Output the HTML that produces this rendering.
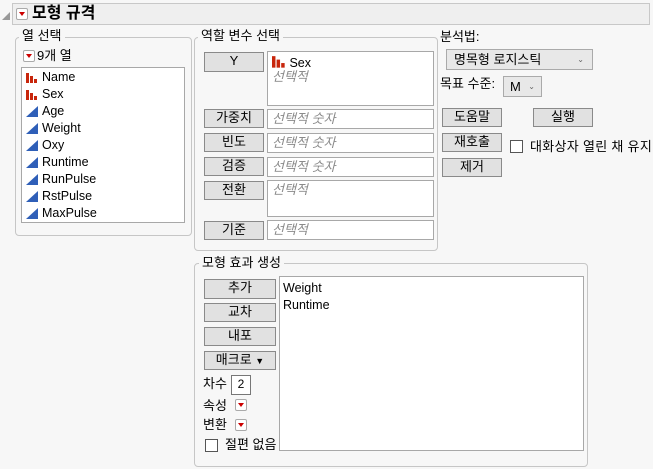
<!DOCTYPE html><html><head><meta charset="utf-8"><style>
*{box-sizing:border-box;margin:0;padding:0}
body{width:653px;height:469px;background:#f7f7f7;font-family:"Liberation Sans","Noto Sans CJK KR",sans-serif;font-size:13px;color:#000;position:relative;overflow:hidden}
.a{position:absolute}
.fs{position:absolute;border:1px solid #c6c6c6;border-radius:4px}
.lg{position:absolute;background:#f7f7f7;padding:0 3px;font-size:13px;line-height:14px}
.btn{position:absolute;background:#e1e1e1;border:1px solid #8a8a8a;text-align:center;font-size:13px;line-height:16px}
.box{position:absolute;background:#fff;border:1px solid #a8a8a8}
.ph{color:#8a8a8a;font-style:italic;font-size:13px;padding-left:4px;line-height:17px}
.dd{position:absolute;width:12px;height:12px;border:1px solid #aaa;background:#fff;border-radius:2px}
.dd:after{content:"";position:absolute;left:2px;top:3px;border-left:3px solid transparent;border-right:3px solid transparent;border-top:4px solid #c00;}
.item{position:absolute;left:20px;height:17px;line-height:17px;font-size:12.5px}
.nom{position:absolute;left:-16px;top:3px;width:12px;height:11px}
.cb{position:absolute;width:13px;height:13px;border:1px solid #555;background:#fff}
</style></head><body>
<div class="a" style="left:2px;top:12px;width:0;height:0;border-left:8px solid transparent;border-bottom:8px solid #999"></div>
<div class="a" style="left:12px;top:3px;width:638px;height:22px;background:#efefef;border:1px solid #c8c8c8"></div>
<div class="dd" style="left:16px;top:8px"></div>
<div class="a" style="left:32px;top:3px;font-size:16px;font-weight:bold;line-height:21px">모형 규격</div>

<div class="fs" style="left:15px;top:37px;width:177px;height:199px"></div>
<div class="lg" style="left:19px;top:29px">열 선택</div>
<div class="dd" style="left:23px;top:50px"></div>
<div class="a" style="left:37px;top:49px;line-height:14px">9개 열</div>
<div class="box" style="left:21px;top:67px;width:164px;height:156px">
<svg width="0" height="0" style="position:absolute"><defs>
<g id="n"><rect x="0" y="1" width="3" height="10" fill="#c8260c"/><rect x="4" y="4" width="3" height="7" fill="#c8260c"/><rect x="8" y="7" width="3" height="4" fill="#c8260c"/></g>
<g id="c"><polygon points="0,11 12,0 12,11" fill="#2f5fb8"/></g></defs></svg>
<div class="item" style="top:1px"><svg class="nom"><use href="#n"/></svg>Name</div>
<div class="item" style="top:18px"><svg class="nom"><use href="#n"/></svg>Sex</div>
<div class="item" style="top:35px"><svg class="nom"><use href="#c"/></svg>Age</div>
<div class="item" style="top:52px"><svg class="nom"><use href="#c"/></svg>Weight</div>
<div class="item" style="top:69px"><svg class="nom"><use href="#c"/></svg>Oxy</div>
<div class="item" style="top:86px"><svg class="nom"><use href="#c"/></svg>Runtime</div>
<div class="item" style="top:103px"><svg class="nom"><use href="#c"/></svg>RunPulse</div>
<div class="item" style="top:120px"><svg class="nom"><use href="#c"/></svg>RstPulse</div>
<div class="item" style="top:137px"><svg class="nom"><use href="#c"/></svg>MaxPulse</div>
</div>

<div class="fs" style="left:194px;top:37px;width:244px;height:214px"></div>
<div class="lg" style="left:198px;top:29px">역할 변수 선택</div>
<div class="btn" style="left:204px;top:52px;width:60px;height:20px">Y</div>
<div class="box" style="left:267px;top:51px;width:167px;height:55px"><div style="position:relative;left:4px;top:3px;line-height:15px;font-size:12.5px"><svg width="14" height="13" style="vertical-align:-1px"><g transform="scale(1.15)"><use href="#n"/></g></svg> Sex</div><div class="ph" style="line-height:17px">선택적</div></div>
<div class="btn" style="left:204px;top:109px;width:60px;height:19px">가중치</div>
<div class="box ph" style="left:267px;top:109px;width:167px;height:20px">선택적 숫자</div>
<div class="btn" style="left:204px;top:133px;width:60px;height:19px">빈도</div>
<div class="box ph" style="left:267px;top:133px;width:167px;height:20px">선택적 숫자</div>
<div class="btn" style="left:204px;top:157px;width:60px;height:19px">검증</div>
<div class="box ph" style="left:267px;top:157px;width:167px;height:20px">선택적 숫자</div>
<div class="btn" style="left:204px;top:181px;width:60px;height:19px">전환</div>
<div class="box ph" style="left:267px;top:180px;width:167px;height:37px">선택적</div>
<div class="btn" style="left:204px;top:221px;width:60px;height:19px">기준</div>
<div class="box ph" style="left:267px;top:220px;width:167px;height:20px">선택적</div>

<div class="a" style="left:440px;top:29px;line-height:15px">분석법:</div>
<div class="a" style="left:446px;top:49px;width:147px;height:21px;background:#e8e8e8;border:1px solid #aaa;line-height:19px;padding-left:7px">명목형 로지스틱<span style="position:absolute;right:8px;font-size:8px;color:#666">&#8964;</span></div>
<div class="a" style="left:440px;top:75px;line-height:17px">목표 수준:</div>
<div class="a" style="left:503px;top:76px;width:39px;height:21px;background:#e8e8e8;border:1px solid #aaa;line-height:19px;padding-left:6px">M<span style="position:absolute;right:6px;font-size:8px;color:#666">&#8964;</span></div>
<div class="btn" style="left:442px;top:108px;width:60px;height:19px">도움말</div>
<div class="btn" style="left:533px;top:108px;width:60px;height:19px">실행</div>
<div class="btn" style="left:442px;top:133px;width:60px;height:19px">재호출</div>
<div class="btn" style="left:442px;top:158px;width:60px;height:19px">제거</div>
<div class="cb" style="left:510px;top:140px"></div>
<div class="a" style="left:530px;top:138px;line-height:17px;letter-spacing:0.3px">대화상자 열린 채 유지</div>

<div class="fs" style="left:194px;top:263px;width:394px;height:204px"></div>
<div class="lg" style="left:199px;top:256px">모형 효과 생성</div>
<div class="btn" style="left:204px;top:279px;width:72px;height:20px">추가</div>
<div class="btn" style="left:204px;top:303px;width:72px;height:19px">교차</div>
<div class="btn" style="left:204px;top:327px;width:72px;height:19px">내포</div>
<div class="btn" style="left:204px;top:351px;width:72px;height:19px">매크로 <span style="font-size:9px">&#9660;</span></div>
<div class="a" style="left:203px;top:376px;line-height:16px">차수</div>
<div class="a" style="left:231px;top:375px;width:20px;height:20px;background:#fff;border:1px solid #777;text-align:center;line-height:16px;font-size:12px">2</div>
<div class="a" style="left:203px;top:397px;line-height:17px">속성</div>
<div class="dd" style="left:235px;top:399px"></div>
<div class="a" style="left:203px;top:416px;line-height:17px">변환</div>
<div class="dd" style="left:235px;top:419px"></div>
<div class="cb" style="left:205px;top:439px"></div>
<div class="a" style="left:225px;top:436px;line-height:17px">절편 없음</div>
<div class="box" style="left:279px;top:276px;width:305px;height:175px;padding:3px 0 0 3px;line-height:17px;font-size:12.5px">Weight<br>Runtime</div>
</body></html>
